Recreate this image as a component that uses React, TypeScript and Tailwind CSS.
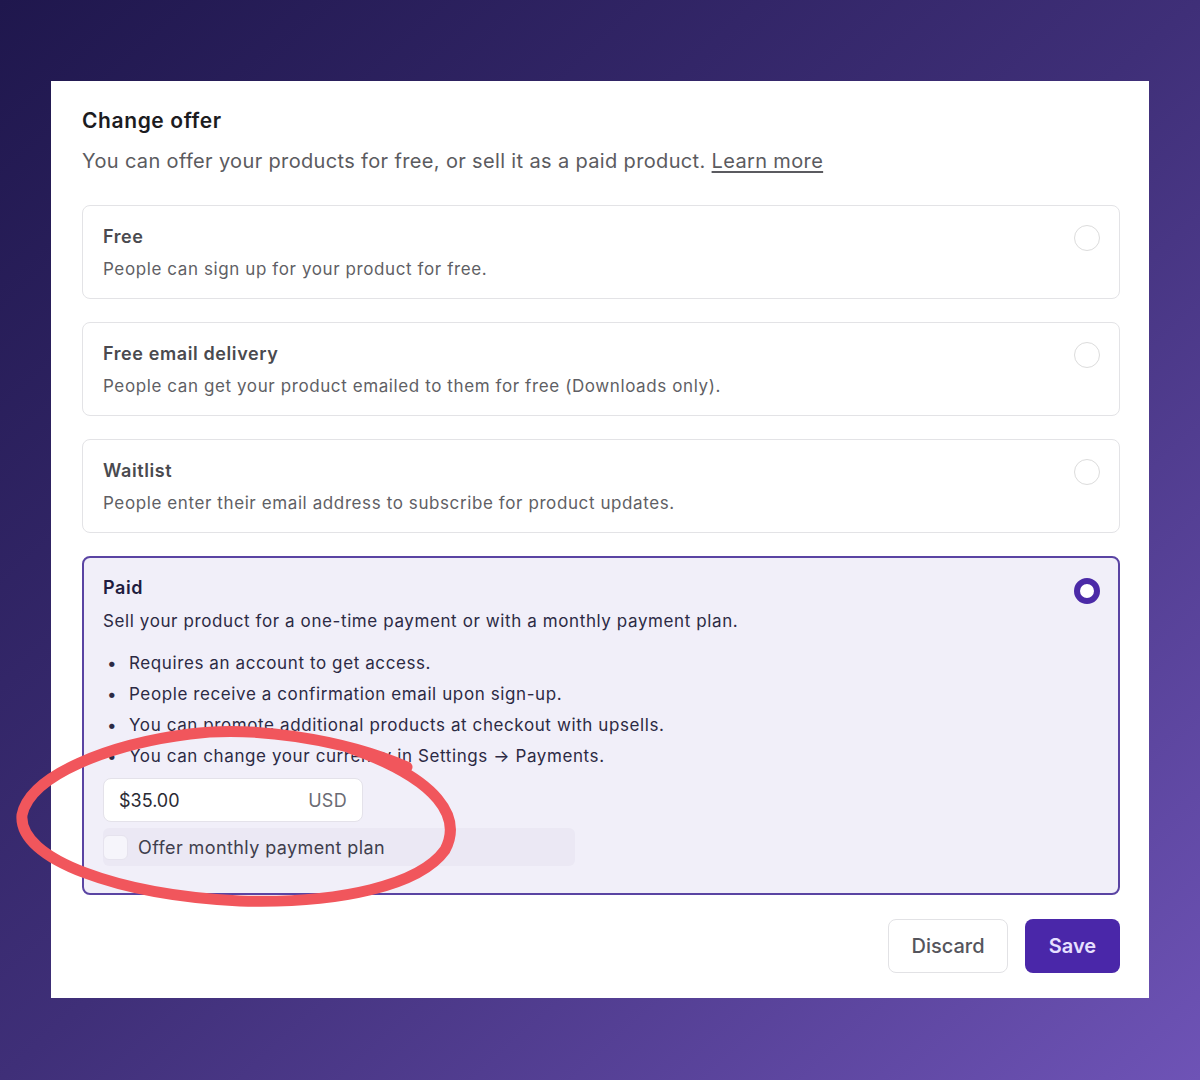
import { useState } from "react";

interface OfferOption {
  id: string;
  title: string;
  description: string;
}

const offerOptions: OfferOption[] = [
  {
    id: "free",
    title: "Free",
    description: "People can sign up for your product for free.",
  },
  {
    id: "email",
    title: "Free email delivery",
    description:
      "People can get your product emailed to them for free (Downloads only).",
  },
  {
    id: "waitlist",
    title: "Waitlist",
    description: "People enter their email address to subscribe for product updates.",
  },
];

const paidNotes = [
  "Requires an account to get access.",
  "People receive a confirmation email upon sign-up.",
  "You can promote additional products at checkout with upsells.",
  "You can change your currency in Settings \u2192 Payments.",
];

function Radio({ checked }: { checked: boolean }) {
  if (checked) {
    return (
      <div className="w-[26px] h-[26px] shrink-0 rounded-full border-[6px] border-[#4b2aa7] bg-white"></div>
    );
  }
  return (
    <div className="w-[26px] h-[26px] shrink-0 rounded-full border-[1.5px] border-[#dcdcdc] bg-white"></div>
  );
}

export default function App() {
  const [price, setPrice] = useState("$35.00");
  const [monthly, setMonthly] = useState(false);

  return (
    <div className="relative w-[1200px] h-[1080px] overflow-hidden bg-gradient-to-br from-[#1f174d] via-[#3f2f78] to-[#6e53b6] pt-[81px] pl-[51px] font-['Inter',sans-serif]">
      <div className="w-[1098px] h-[917px] bg-white pt-[26px] pl-[31px] pr-[29px] pb-[25px] flex flex-col">
        <h1 className="text-[21px] leading-[28px] font-semibold tracking-[0.6px] text-[#1c1c1f]">
          Change offer
        </h1>
        <p className="mt-[12px] text-[20px] leading-[28px] tracking-[0.35px] text-[#5b5b60]">
          You can offer your products for free, or sell it as a paid product.{" "}
          <span className="underline underline-offset-[3px]">Learn more</span>
        </p>

        <div className="mt-[30px] flex flex-col gap-[23px]">
          {offerOptions.map((option) => (
            <div
              key={option.id}
              className="h-[94px] rounded-lg border border-[#e3e3e6] pt-[19px] pl-[20px] pr-[19px] flex justify-between"
            >
              <div>
                <div className="text-[18px] leading-[24px] font-semibold tracking-[0.6px] text-[#4a4a4f]">
                  {option.title}
                </div>
                <div className="mt-[8px] text-[17px] leading-[24px] tracking-[0.6px] text-[#5f5f65]">
                  {option.description}
                </div>
              </div>
              <Radio checked={false} />
            </div>
          ))}

          {/* 선택된 옵션 */}
          <div className="h-[339px] rounded-lg border-2 border-[#5a44a3] bg-[#f1eff9] pt-[18px] pl-[19px] pr-[18px] flex justify-between">
            <div className="flex flex-col">
              <div className="text-[18px] leading-[24px] font-semibold tracking-[0.6px] text-[#211c3f]">
                Paid
              </div>
              <div className="mt-[9px] text-[17px] leading-[24px] tracking-[0.6px] text-[#2c2a44]">
                Sell your product for a one-time payment or with a monthly payment plan.
              </div>
              <ul className="mt-[15px] text-[17px] leading-[31px] tracking-[0.6px] text-[#2c2a44]">
                {paidNotes.map((note) => (
                  <li key={note} className="flex">
                    <span className="w-[26px] pl-[4px]">•</span>
                    <span>{note}</span>
                  </li>
                ))}
              </ul>
              <div className="mt-[6px] w-[260px] h-[44px] rounded-lg border border-[#e4e2ea] bg-white px-[15px] flex items-center justify-between">
                <input
                  className="w-[150px] bg-transparent outline-none text-[18px] text-[#2a2a33]"
                  value={price}
                  onChange={(e) => setPrice(e.target.value)}
                />
                <span className="text-[18px] tracking-[0.3px] text-[#6b6b73]">USD</span>
              </div>
              <label className="mt-[6px] w-[472px] h-[38px] rounded-md bg-[#ebe8f4] flex items-center gap-[10px] cursor-pointer">
                <input
                  type="checkbox"
                  className="sr-only"
                  checked={monthly}
                  onChange={() => setMonthly(!monthly)}
                />
                <span className="w-[25px] h-[25px] rounded-md border border-[#e6e3ee] bg-[#f6f5fb]"></span>
                <span className="text-[18px] tracking-[0.4px] text-[#3f3e4d]">Offer monthly payment plan</span>
              </label>
            </div>
            <div className="pt-[2px]">
              <Radio checked={true} />
            </div>
          </div>
        </div>

        <div className="mt-[24px] flex justify-end gap-[17px]">
          <button
            type="button"
            className="w-[120px] h-[54px] rounded-lg border border-[#e2e2e5] bg-white text-[20px] font-medium text-[#55555c]"
          >
            Discard
          </button>
          <button
            type="button"
            className="w-[95px] h-[54px] rounded-lg bg-[#4a27a9] text-[20px] font-semibold text-[#e7e0ff]"
          >
            Save
          </button>
        </div>
      </div>

      {/* 빨간 동그라미 표시 */}
      <svg
        className="absolute left-0 top-0 pointer-events-none"
        width="1200"
        height="1080"
        viewBox="0 0 1200 1080"
      >
        <path
          d="M 407 767 C 340 738, 250 726, 190 734 C 110 744, 30 775, 22 815 C 18 860, 120 895, 240 901 C 340 904, 420 885, 445 850 C 462 818, 440 780, 350 748"
          fill="none"
          stroke="#f1565c"
          strokeWidth="11"
          strokeLinecap="round"
        />
      </svg>
    </div>
  );
}
